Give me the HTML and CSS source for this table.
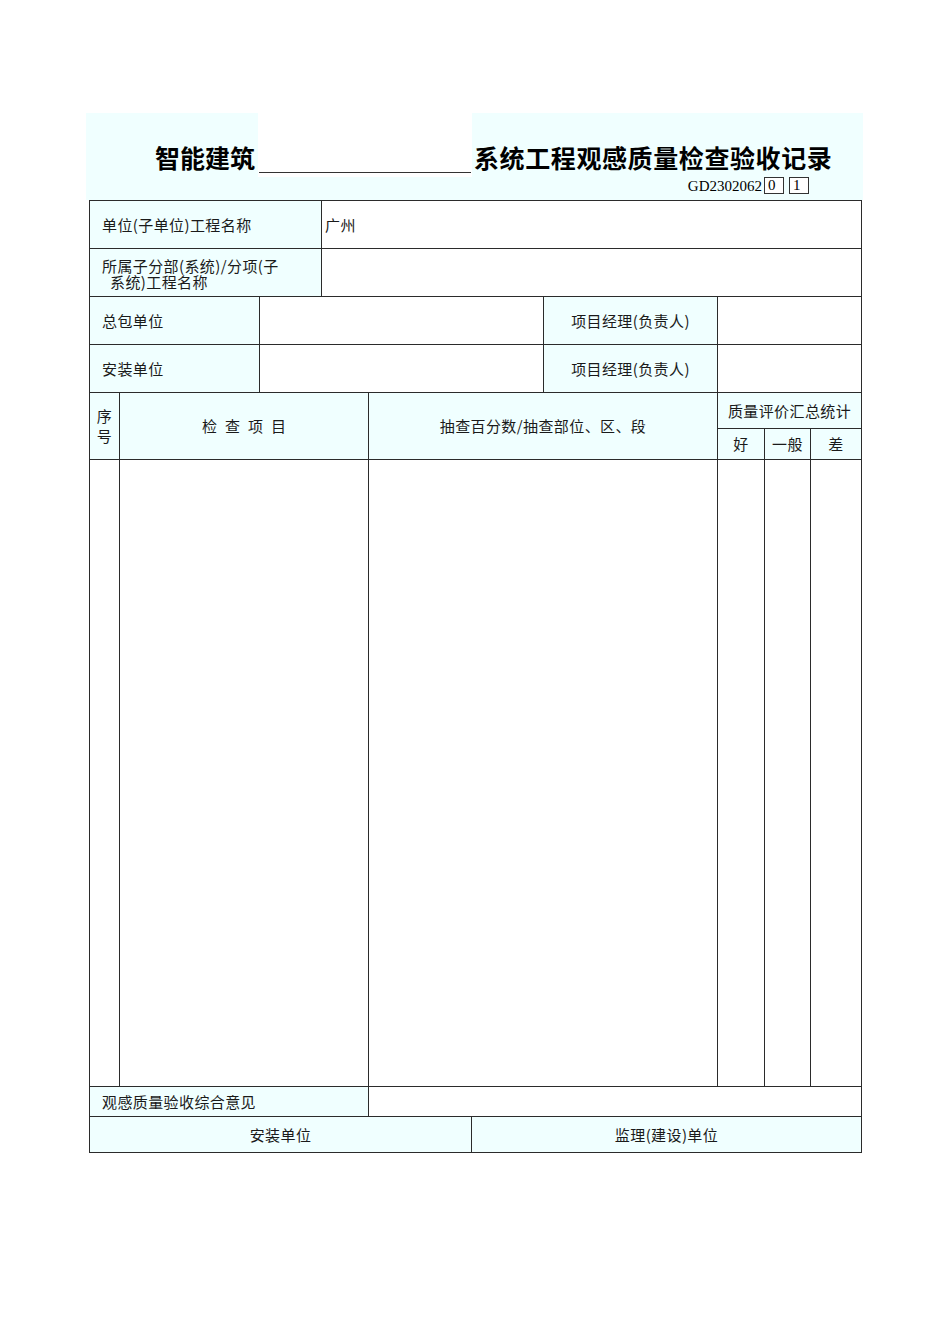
FILE: index.html
```html
<!DOCTYPE html>
<html lang="zh-CN">
<head>
<meta charset="utf-8">
<title>智能建筑系统工程观感质量检查验收记录</title>
<link rel="stylesheet" href="styles.css">
</head>
<body>
<div class="page">
  <div class="title-row">
    <div class="t-left"><span class="title">智能建筑</span></div>
    <div class="t-mid"><div class="blank"></div></div>
    <div class="t-right"><span class="title">系统工程观感质量检查验收记录</span></div>
  </div>
  <div class="code-row">
    <span class="code">GD2302062</span>
    <span class="box">0</span>
    <span class="box box2">1</span>
  </div>
  <div class="sheet">
    <div class="c lab r1 span13 left">单位(子单位)工程名称</div>
    <div class="c val r1 span410 left tight">广州</div>

    <div class="c lab r2 span13 left two">所属子分部(系统)/分项(子<br><span class="ind">系统)工程名称</span></div>
    <div class="c val r2 span410"></div>

    <div class="c lab r3 span12 left">总包单位</div>
    <div class="c val r3 span36"></div>
    <div class="c lab r3 span77 center">项目经理(负责人)</div>
    <div class="c val r3 span810"></div>

    <div class="c lab r4 span12 left">安装单位</div>
    <div class="c val r4 span36"></div>
    <div class="c lab r4 span77 center">项目经理(负责人)</div>
    <div class="c val r4 span810"></div>

    <div class="c lab h56 col1 center seq">序<br>号</div>
    <div class="c lab h56 span24 center"><span class="spaced">检查项目</span></div>
    <div class="c lab h56 span57 center">抽查百分数/抽查部位、区、段</div>
    <div class="c lab r5 span810 center">质量评价汇总统计</div>
    <div class="c lab r6 col8 center">好</div>
    <div class="c lab r6 col9 center">一般</div>
    <div class="c lab r6 col10 center">差</div>

    <div class="c val r7 col1"></div>
    <div class="c val r7 span24"></div>
    <div class="c val r7 span57"></div>
    <div class="c val r7 col8"></div>
    <div class="c val r7 col9"></div>
    <div class="c val r7 col10"></div>

    <div class="c lab r8 span14 left">观感质量验收综合意见</div>
    <div class="c val r8 span510"></div>

    <div class="c lab r9 span15 center">安装单位</div>
    <div class="c lab r9 span610 center">监理(建设)单位</div>
  </div>
</div>
</body>
</html>
```

FILE: styles.css
```css
html, body {
  margin: 0;
  padding: 0;
  background: #ffffff;
}

body {
  font-family: "Noto Sans CJK SC", "Noto Sans", sans-serif;
  color: #111;
}

.page {
  margin: 113px 0 0 86px;
  width: 777px;
}

.title-row {
  display: flex;
  height: 64px;
}

.t-left {
  width: 172px;
  background: #f0ffff;
  display: flex;
  justify-content: flex-end;
  align-items: flex-end;
}

.t-mid {
  width: 214px;
  background: #ffffff;
  display: flex;
  padding-bottom: 4px;
  box-sizing: border-box;
}

.blank {
  flex: 1;
  margin: 0 1px;
  border-bottom: 1px solid #333;
}

.t-right {
  flex: 1;
  background: #f0ffff;
  display: flex;
  align-items: flex-end;
  padding-left: 2px;
}

.title {
  font-size: 25px;
  font-weight: 700;
  letter-spacing: 0.6px;
  line-height: 30px;
  color: #000;
  padding-bottom: 5px;
  white-space: nowrap;
}

.t-left .title {
  padding-right: 3px;
  letter-spacing: 0;
}

.code-row {
  height: 23px;
  background: #f0ffff;
  display: flex;
  align-items: flex-start;
  justify-content: flex-end;
  padding-right: 54px;
  font-family: "Liberation Serif", "DejaVu Serif", serif;
  font-size: 15px;
  line-height: 16px;
  color: #000;
}

.code {
  margin-top: 1px;
  margin-right: 2px;
}

.box {
  border: 1px solid #333;
  padding-left: 3px;
  box-sizing: border-box;
  width: 20px;
  height: 17px;
  line-height: 15px;
  background: #fff;
}

.box2 {
  margin-left: 5px;
}

.sheet {
  margin-left: 3px;
  width: 773px;
  box-sizing: border-box;
  padding: 1px;
  background: #2b2b2b;
  display: grid;
  gap: 1px;
  grid-template-columns: 29px 139px 61px 46px 102px 71px 173px 46px 45px 50px;
  grid-template-rows: 47px 47px 47px 47px 35px 30px 626px 29px 35px;
}

.c {
  font-size: 15px;
  letter-spacing: 0.4px;
  display: flex;
  align-items: center;
  color: #1a1a1a;
  line-height: 16px;
  white-space: nowrap;
  overflow: hidden;
}

.lab { background: #f0ffff; }
.val { background: #ffffff; }

.left { padding-left: 12px; }
.tight { padding-left: 3px; }
.center { justify-content: center; text-align: center; }

.two { display: block; padding-top: 9px; line-height: 16px; }
.ind { padding-left: 8px; }

.seq { display: flex; align-items: center; line-height: 20px; }
.spaced { letter-spacing: 8px; padding-left: 8px; }

.r1 { grid-row: 1; }
.r2 { grid-row: 2; }
.r3 { grid-row: 3; }
.r4 { grid-row: 4; }
.r5 { grid-row: 5; }
.r6 { grid-row: 6; }
.r7 { grid-row: 7; }
.r8 { grid-row: 8; }
.r9 { grid-row: 9; }
.h56 { grid-row: 5 / span 2; }

.col1 { grid-column: 1; }
.col8 { grid-column: 8; }
.col9 { grid-column: 9; }
.col10 { grid-column: 10; }
.span13 { grid-column: 1 / 4; }
.span410 { grid-column: 4 / 11; }
.span12 { grid-column: 1 / 3; }
.span36 { grid-column: 3 / 7; }
.span77 { grid-column: 7 / 8; }
.span810 { grid-column: 8 / 11; }
.span24 { grid-column: 2 / 5; }
.span57 { grid-column: 5 / 8; }
.span14 { grid-column: 1 / 5; }
.span510 { grid-column: 5 / 11; }
.span15 { grid-column: 1 / 6; }
.span610 { grid-column: 6 / 11; }
```
